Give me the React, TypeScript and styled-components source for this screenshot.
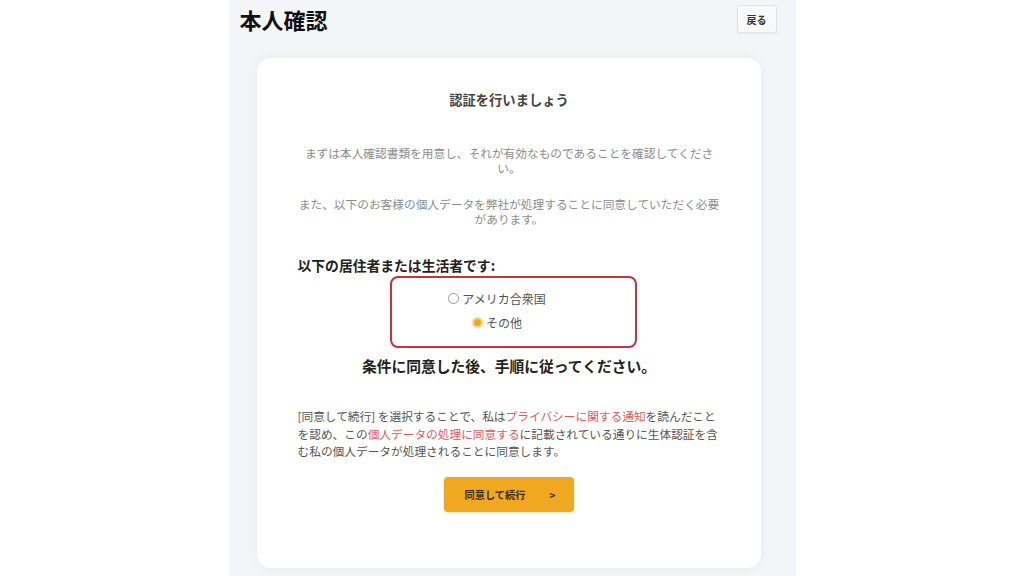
import React, { useState } from "react";
import styled, { createGlobalStyle } from "styled-components";

const GlobalStyle = createGlobalStyle`
  html, body {
    margin: 0;
    padding: 0;
    background: #ffffff;
  }
  body {
    font-family: "Noto Sans CJK JP", "Noto Sans", sans-serif;
    color: #333;
  }
  * { box-sizing: border-box; }
`;

const Page = styled.div`
  width: 1024px;
  height: 576px;
  overflow: hidden;
  display: flex;
  justify-content: center;
`;

const Panel = styled.main`
  width: 567px;
  height: 576px;
  background: #f4f5f9;
  padding: 5px 19px 0 11px;
  display: flex;
  flex-direction: column;
`;

const Header = styled.header`
  display: flex;
  justify-content: space-between;
  align-items: flex-start;
  height: 28px;
`;

const Title = styled.h1`
  margin: 0;
  font-size: 22px;
  line-height: 28px;
  font-weight: 700;
  color: #111;
  letter-spacing: 0;
`;

const BackButton = styled.button`
  width: 40px;
  height: 28px;
  padding: 0;
  border: 1px solid #e1e3e8;
  border-radius: 3px;
  background: #f8f9fb;
  box-shadow: 0 1px 2px rgba(0, 0, 0, 0.05);
  font-family: inherit;
  font-size: 10px;
  font-weight: 700;
  color: #333;
`;

const Card = styled.section`
  margin: 25px 16px 0 17px;
  height: 510px;
  background: #ffffff;
  border-radius: 14px;
  box-shadow: 0 0 14px rgba(30, 40, 80, 0.05);
  padding: 32px 40px 0 41px;
  display: flex;
  flex-direction: column;
`;

const Subtitle = styled.h2`
  margin: 0;
  text-align: center;
  font-size: 13.3px;
  line-height: 20px;
  font-weight: 600;
  color: #444;
`;

const Note = styled.p<{ $gap: number }>`
  margin: ${(p) => p.$gap}px 0 0;
  text-align: center;
  font-size: 11.7px;
  line-height: 15px;
  color: #8c8c8c;
`;

const Question = styled.h3`
  margin: 29px 0 0;
  font-size: 13.8px;
  line-height: 20px;
  font-weight: 700;
  color: #222;
`;

const ChoiceBox = styled.div`
  margin: 1px 0 0 92px;
  width: 247px;
  height: 72px;
  border: 2px solid #c8323c;
  border-radius: 8px;
  padding: 8px 32px 0 0;
  display: flex;
  flex-direction: column;
  align-items: center;
`;

const Option = styled.label`
  height: 24px;
  display: flex;
  align-items: center;
  gap: 3px;
  font-size: 12px;
  color: #555;
  cursor: pointer;
`;

const Dot = styled.span<{ $checked: boolean }>`
  width: 11px;
  height: 11px;
  border-radius: 50%;
  flex: none;
  border: ${(p) => (p.$checked ? "2px solid #f8d68f" : "1px solid #9a9a9a")};
  background: ${(p) => (p.$checked ? "#f0a820" : "#ffffff")};
`;

const Instruction = styled.p`
  margin: 7px 0 0;
  text-align: center;
  font-size: 14.75px;
  line-height: 22px;
  font-weight: 700;
  color: #222;
`;

const Consent = styled.p`
  margin: 30px 0 0;
  font-size: 11.7px;
  line-height: 17.5px;
  color: #555;
`;

const Link = styled.a`
  color: #e2595c;
  text-decoration: none;
`;

const Continue = styled.button`
  margin: 17px auto 0;
  width: 130px;
  height: 35px;
  border: none;
  border-radius: 4px;
  background: #f0a820;
  box-shadow: 0 1px 3px rgba(200, 140, 0, 0.25);
  font-family: inherit;
  font-size: 10.2px;
  font-weight: 700;
  color: #3b2c08;
  display: flex;
  align-items: center;
  justify-content: center;
  gap: 24px;
  padding-left: 8px;
`;

const options = ["アメリカ合衆国", "その他"];

export default function App() {
  const [choice, setChoice] = useState(1);
  return (
    <Page>
      <GlobalStyle />
      <Panel>
        <Header>
          <Title>本人確認</Title>
          <BackButton>戻る</BackButton>
        </Header>
        <Card>
          <Subtitle>認証を行いましょう</Subtitle>
          <Note $gap={35}>
            まずは本人確認書類を用意し、それが有効なものであることを確認してください。
          </Note>
          <Note $gap={21}>
            また、以下のお客様の個人データを弊社が処理することに同意していただく必要があります。
          </Note>
          <Question>以下の居住者または生活者です:</Question>
          <ChoiceBox>
            {options.map((o, i) => (
              <Option key={o} onClick={() => setChoice(i)}>
                <Dot $checked={choice === i} />
                {o}
              </Option>
            ))}
          </ChoiceBox>
          <Instruction>条件に同意した後、手順に従ってください。</Instruction>
          <Consent>
            [同意して続行] を選択することで、私は
            <Link href="#">プライバシーに関する通知</Link>
            を読んだことを認め、この
            <Link href="#">個人データの処理に同意する</Link>
            に記載されている通りに生体認証を含む私の個人データが処理されることに同意します。
          </Consent>
          <Continue>
            <span>同意して続行</span>
            <span>&gt;</span>
          </Continue>
        </Card>
      </Panel>
    </Page>
  );
}
